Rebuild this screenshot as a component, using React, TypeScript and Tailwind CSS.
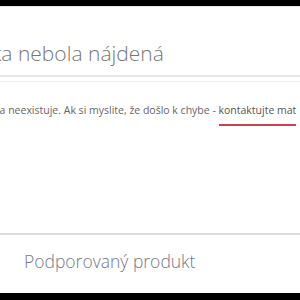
import React from 'react';

const font = { fontFamily: '"Open Sans", "Liberation Sans", sans-serif' };

const App: React.FC = () => {
  return (
    <div className="w-[300px] h-[300px] overflow-hidden bg-white flex flex-col" style={font}>
      <div className="h-[6px] bg-black shrink-0" />
      <div className="h-px bg-[#e5e5e5] shrink-0" />

      {/* page heading */}
      <div className="flex-1 flex flex-col overflow-hidden">
        <div className="pt-[33px] pb-[9px] border-b-2 border-[#e6e6e6] whitespace-nowrap">
          <h1 className="ml-[-59px] text-[21px] font-light text-[#777] leading-[26px]">Stránka nebola nájdená</h1>
        </div>
        <div className="h-[5px] border-b border-[#f0f0f0]" />

        <p className="mt-[20px] ml-[-32px] whitespace-nowrap text-[10.5px] text-[#666] leading-[16px]">
          Stránka neexistuje. Ak si myslite, že došlo k chybe -{' '}
          <a href="#" className="text-[#555] border-b-2 border-[#c9444f] pb-[7px]">kontaktujte mat</a>
        </p>
      </div>

      {/* footer */}
      <div className="h-[60px] shrink-0 border-t-2 border-[#dcdcdc] px-6 pt-[14px]">
        <span className="text-[17.5px] font-light text-[#737887] leading-[24px]">Podporovaný produkt</span>
      </div>
      <div className="h-[7px] bg-black shrink-0" />
    </div>
  );
};

export default App;
